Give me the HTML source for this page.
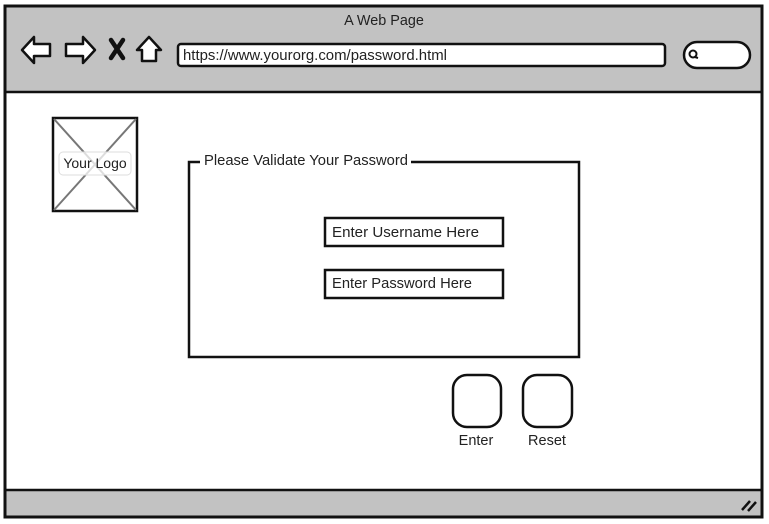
<!DOCTYPE html>
<html><head><meta charset="utf-8"><style>
html,body{margin:0;padding:0;background:#fff;width:769px;height:524px;overflow:hidden}
svg{display:block}
text{font-family:"Liberation Sans",sans-serif;fill:#222}
</style></head><body>
<svg width="769" height="524" viewBox="0 0 769 524">
<rect x="0" y="0" width="769" height="524" fill="#fff"/>
<rect x="5" y="6" width="757" height="86" fill="#c2c2c2"/>
<rect x="5" y="490" width="757" height="27" fill="#c2c2c2"/>
<rect x="5" y="6" width="757" height="511" fill="none" stroke="#111" stroke-width="3"/>
<line x1="5" y1="92" x2="762" y2="92" stroke="#111" stroke-width="2.5"/>
<line x1="5" y1="490" x2="762" y2="490" stroke="#111" stroke-width="2.5"/>
<text x="384" y="25" font-size="14.4" text-anchor="middle">A Web Page</text>
<path d="M22 50 L34 37 L34 44 L50 44 L50 56 L34 56 L34 63 Z" fill="#fff" stroke="#111" stroke-width="2.5" stroke-linejoin="round"/>
<path d="M95 50 L83 37 L83 44 L66 44 L66 56 L83 56 L83 63 Z" fill="#fff" stroke="#111" stroke-width="2.5" stroke-linejoin="round"/>
<path d="M111 40 L123 58 M123 40 L111 58" stroke="#111" stroke-width="4.5" stroke-linecap="round"/>
<path d="M149 37 L161 50 L156 50 L156 61 L142 61 L142 50 L137 50 Z" fill="#fff" stroke="#111" stroke-width="2.5" stroke-linejoin="round"/>
<rect x="178" y="44" width="487" height="22" rx="3" fill="#fff" stroke="#111" stroke-width="2.5"/>
<text x="183" y="60" font-size="15" textLength="264" lengthAdjust="spacingAndGlyphs">https://www.yourorg.com/password.html</text>
<rect x="684" y="42" width="66" height="26" rx="13" fill="#fff" stroke="#111" stroke-width="2.5"/>
<circle cx="693" cy="54" r="3.5" fill="none" stroke="#111" stroke-width="2"/>
<line x1="695" y1="57" x2="698" y2="58" stroke="#111" stroke-width="2"/>
<rect x="53" y="118" width="84" height="93" fill="#fff" stroke="#111" stroke-width="2.5"/>
<line x1="54" y1="119" x2="136" y2="210" stroke="#777" stroke-width="2"/>
<line x1="136" y1="119" x2="54" y2="210" stroke="#777" stroke-width="2"/>
<rect x="59" y="152" width="72" height="23" rx="4" fill="#fff" fill-opacity="0.75" stroke="#ddd"/>
<text x="95" y="168" font-size="14" text-anchor="middle">Your Logo</text>
<path d="M200 162 L189 162 L189 357 L579 357 L579 162 L411 162" fill="none" stroke="#111" stroke-width="2.5"/>
<text x="204" y="165" font-size="14.5" textLength="204" lengthAdjust="spacingAndGlyphs">Please Validate Your Password</text>
<rect x="325" y="218" width="178" height="28" fill="#fff" stroke="#111" stroke-width="2.5"/>
<text x="332" y="237" font-size="15" textLength="147" lengthAdjust="spacingAndGlyphs">Enter Username Here</text>
<rect x="325" y="270" width="178" height="28" fill="#fff" stroke="#111" stroke-width="2.5"/>
<text x="332" y="288" font-size="15" textLength="140" lengthAdjust="spacingAndGlyphs">Enter Password Here</text>
<rect x="453" y="375" width="48" height="52" rx="14" fill="#fff" stroke="#111" stroke-width="2.5"/>
<rect x="523" y="375" width="49" height="52" rx="14" fill="#fff" stroke="#111" stroke-width="2.5"/>
<text x="476" y="445" font-size="14.5" text-anchor="middle">Enter</text>
<text x="547" y="445" font-size="14.5" text-anchor="middle">Reset</text>
<line x1="742" y1="510" x2="750" y2="501" stroke="#111" stroke-width="2.5"/>
<line x1="748" y1="511" x2="756" y2="502" stroke="#111" stroke-width="2.5"/>
</svg>
</body></html>
